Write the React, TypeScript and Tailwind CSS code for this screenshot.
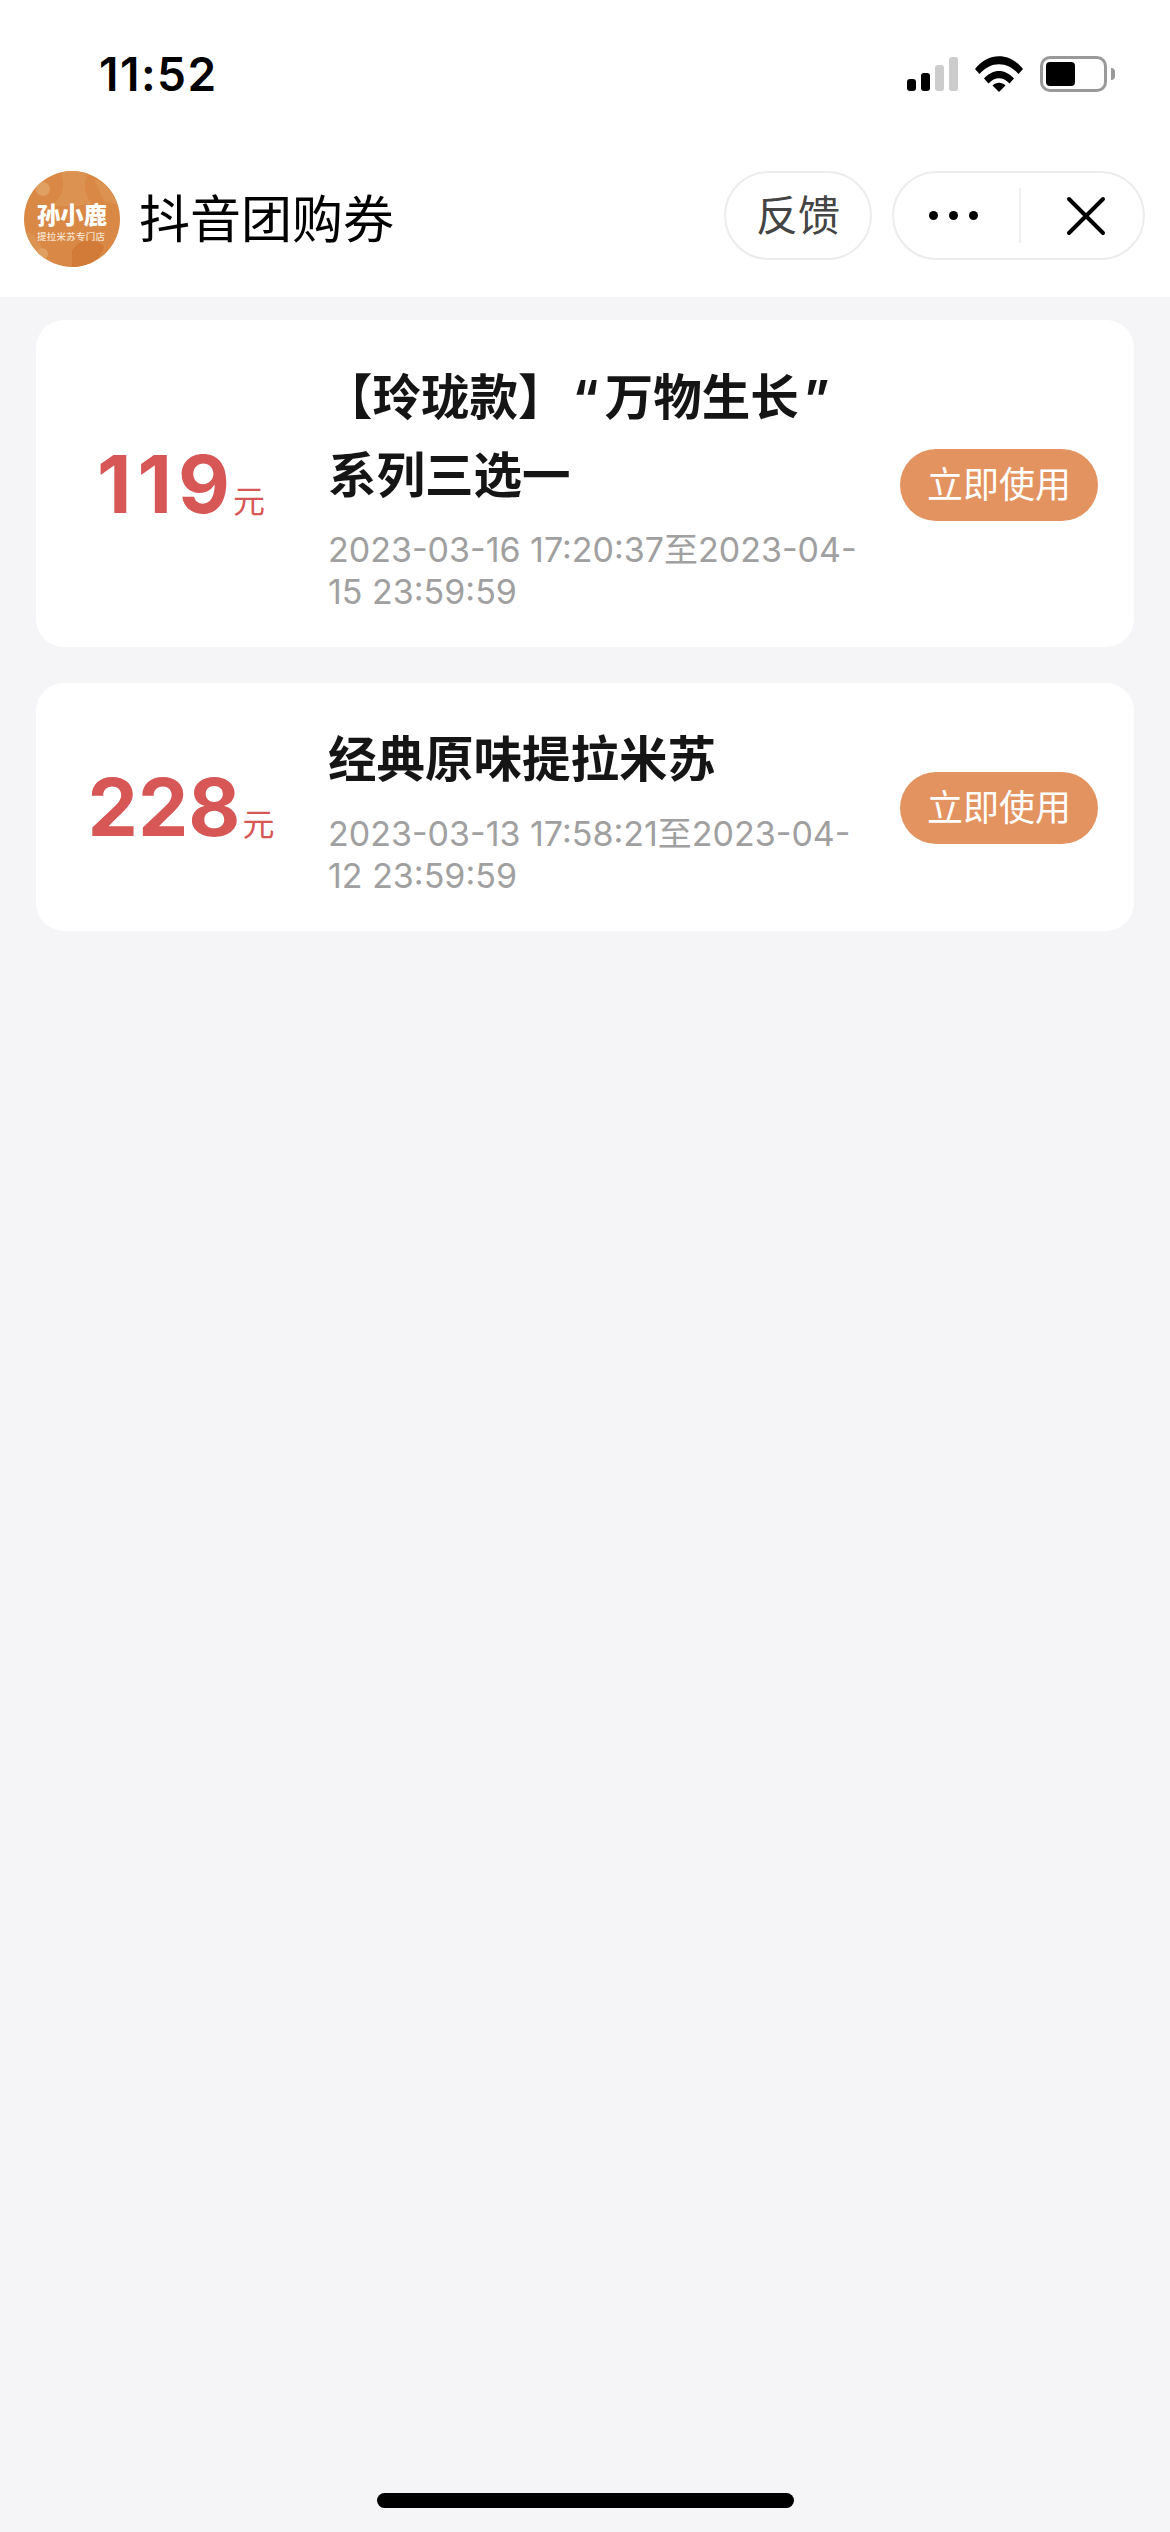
import type { ReactNode } from "react";

const SANS = "font-['Inter','Noto_Sans_CJK_SC',sans-serif]";

function Signal() {
  return (
    <div className="flex items-end gap-[5px] h-[34px]">
      <div className="w-[9px] h-[12px] rounded-[3px] bg-black" />
      <div className="w-[9px] h-[18px] rounded-[3px] bg-black" />
      <div className="w-[9px] h-[26px] rounded-[3px] bg-[#cccccc]" />
      <div className="w-[9px] h-[34px] rounded-[3px] bg-[#cccccc]" />
    </div>
  );
}

function Wifi() {
  return (
    <svg width="48" height="36" viewBox="0 0 48 36" className="ml-[17px]">
      <path d="M0 13 C13 -4 35 -4 48 13 L43.5 18 C32 5 16 5 4.5 18 Z" fill="#000" />
      <path d="M9 22.5 C18 12.5 30 12.5 39 22.5 L34.5 27.5 C28 20.5 20 20.5 13.5 27.5 Z" fill="#000" />
      <path d="M17.5 29.5 C21 25.8 27 25.8 30.5 29.5 L24 36 Z" fill="#000" />
    </svg>
  );
}

function Battery() {
  return (
    <div className="flex items-center ml-[17px]">
      <div className="w-[67px] h-[36px] rounded-[10px] border-[3px] border-[#999999] p-[3px] flex">
        <div className="w-[29px] h-full rounded-[4px] bg-black" />
      </div>
      <div className="ml-[4px] w-[4px] h-[12px] rounded-r-[4px] bg-[#999999]" />
    </div>
  );
}

function Logo() {
  return (
    <svg width="96" height="96" viewBox="0 0 96 96" className="self-start shrink-0">
      <defs>
        <clipPath id="logo-clip">
          <circle cx="48" cy="48" r="48" />
        </clipPath>
      </defs>
      <g clipPath="url(#logo-clip)">
        <rect width="96" height="96" fill="#d98845" />
        <path d="M34 -4 C44 14 38 26 28 34 C40 36 58 36 68 32 C58 22 60 8 66 -4 Z" fill="#dc9250" />
        <path d="M0 60 C12 62 20 72 22 96 L0 96 Z" fill="#dc9250" />
        <path d="M48 80 C56 66 72 66 80 76 C76 90 60 100 48 98 Z" fill="#d27a38" />
        <path d="M70 8 C80 10 90 22 94 34 L80 30 Z" fill="#dc9250" />
        <circle cx="19" cy="18" r="7" fill="#e0a062" />
        <circle cx="18" cy="83" r="6" fill="#e0a062" />
      </g>
      <text x="13" y="53" fill="#fff" fontSize="24" fontWeight="900" fontFamily="'Noto Sans CJK SC',sans-serif" textLength="70" lengthAdjust="spacingAndGlyphs">孙小鹿</text>
      <text x="13" y="69" fill="#f8e3d0" fontSize="9.5" fontWeight="500" fontFamily="'Noto Sans CJK SC',sans-serif" textLength="68">提拉米苏专门店</text>
    </svg>
  );
}

function Coupon({
  price,
  priceClass,
  title,
  date,
  cardClass,
}: {
  price: string;
  priceClass: string;
  title: ReactNode;
  date: string;
  cardClass: string;
}) {
  return (
    <div className={`flex items-center bg-white rounded-[28px] ${cardClass}`}>
      <div className="w-[290px] shrink-0 flex justify-center items-baseline text-[#d75656]">
        <span className={`text-[80px] leading-none font-bold ${priceClass}`}>{price}</span>
        <span className="ml-[2px] text-[32px] leading-none font-normal">元</span>
      </div>
      <div className="ml-[2px] w-[536px] shrink-0 pt-[38px] pb-[34px]">
        <div className="text-[#151515] text-[48.5px] leading-[78px] font-bold">{title}</div>
        <div className="mt-[14px] text-[#a0a0a0] text-[34px] leading-[42px]">{date}</div>
      </div>
      <button className="ml-auto mt-[2px] mr-[36px] w-[198px] h-[72px] rounded-full bg-[#e39360] text-white text-[36px] leading-none flex items-center justify-center">
        立即使用
      </button>
    </div>
  );
}

export default function App() {
  return (
    <div className={`w-[1170px] h-[2532px] flex flex-col bg-[#f5f4f7] ${SANS}`}>
      <header className="h-[297px] bg-white shrink-0">
        <div className="h-[148px] flex items-center pl-[99px] pr-[55px]">
          <span className="text-[46px] leading-none font-semibold text-black tracking-[1.5px]">11:52</span>
          <div className="ml-auto flex items-center">
            <Signal />
            <Wifi />
            <Battery />
          </div>
        </div>
        <div className="mt-[23px] h-[89px] flex items-center pl-[24px] pr-[25px]">
          <Logo />
          <span className="ml-[19px] mt-[8px] text-[51px] leading-none text-black">抖音团购券</span>
          <button className="ml-auto w-[148px] h-[89px] rounded-full border-2 border-[#ececec] text-[#444444] text-[42px] leading-none flex items-center justify-center">
            反馈
          </button>
          <div className="ml-[20px] w-[253px] h-[89px] rounded-full border-2 border-[#ececec] flex items-center">
            <div className="w-[125px] pr-[6px] flex items-center justify-center gap-[11px]">
              <div className="w-[9px] h-[9px] rounded-full bg-black" />
              <div className="w-[9px] h-[9px] rounded-full bg-black" />
              <div className="w-[9px] h-[9px] rounded-full bg-black" />
            </div>
            <div className="w-[2px] h-[55px] bg-[#efefef]" />
            <div className="flex-1 flex items-center justify-center pl-[8px]">
              <svg width="40" height="40" viewBox="0 0 40 40" fill="none" stroke="#000" strokeWidth="4" strokeLinecap="round">
                <path d="M3 3 L37 37 M37 3 L3 37" />
              </svg>
            </div>
          </div>
        </div>
      </header>
      <main className="flex-1 flex flex-col gap-[36px] px-[36px] pt-[23px]">
        <Coupon
          price="119"
          priceClass="tracking-[6px] mr-[-5px]"
          title={
            <>
              <div className="whitespace-nowrap ml-[-4px]">
                【玲珑款】<span className="ml-[6px]">“</span>
                <span className="ml-[6px]">万物生长</span>
                <span className="ml-[5px]">”</span>
              </div>
              <div className="whitespace-nowrap">系列三选一</div>
            </>
          }
          date="2023-03-16 17:20:37至2023-04-15 23:59:59"
          cardClass="h-[327px]"
        />
        <Coupon
          price="228"
          priceClass=""
          title={<div className="whitespace-nowrap">经典原味提拉米苏</div>}
          date="2023-03-13 17:58:21至2023-04-12 23:59:59"
          cardClass="h-[248px]"
        />
      </main>
      <div className="h-[48px] pt-[9px] shrink-0 flex justify-center">
        <div className="w-[417px] h-[15px] rounded-full bg-black" />
      </div>
    </div>
  );
}
